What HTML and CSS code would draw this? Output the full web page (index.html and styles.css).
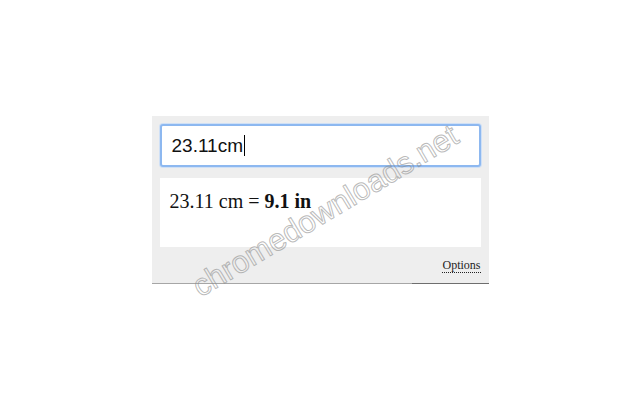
FILE: index.html
```html
<!DOCTYPE html>
<html>
<head>
<meta charset="utf-8">
<link rel="stylesheet" href="styles.css">
</head>
<body>
<div class="panel">
  <div class="input"><span class="value">23.11cm</span><span class="caret"></span></div>
  <div class="result">23.11 cm = <b>9.1 in</b></div>
  <div class="footer"><a class="options">Options</a></div>
  <div class="watermark">chromedownloads.net</div>
</div>
</body>
</html>
```
FILE: styles.css
```css
html, body { margin: 0; padding: 0; background: #ffffff; }
body { width: 640px; height: 400px; overflow: hidden; }
.panel {
  position: relative;
  width: 321px;
  margin: 116px auto 0;
  padding: 8px 8px 0 8px;
  background: #eeeeee;
  border-bottom: 1px solid #a6a6a6;
}
.panel::after {
  content: "";
  position: absolute;
  right: 0;
  bottom: -1px;
  width: 77px;
  height: 1px;
  background: #6e6e6e;
}
.input {
  height: 39px;
  display: flex;
  align-items: center;
  padding-left: 10px;
  background: #fff;
  border: 2px solid #8db8f0;
  border-radius: 3px;
  box-shadow: 0 0 0 1px #cfe0f6;
  font-family: "Liberation Sans", Arial, sans-serif;
  font-size: 19px;
  color: #111;
}
.caret { display: inline-block; width: 1px; height: 21px; background: #000; margin-left: 1px; }
.result {
  margin-top: 11px;
  height: 69px;
  box-sizing: border-box;
  padding: 12px 0 0 10px;
  background: #fff;
  font-family: "Liberation Serif", "Times New Roman", serif;
  font-size: 20px;
  color: #111;
}
.footer {
  height: 36px;
  display: flex;
  justify-content: flex-end;
  align-items: flex-start;
  padding-top: 11px;
  box-sizing: border-box;
}
.options {
  font-family: "Liberation Serif", "Times New Roman", serif;
  font-size: 12px;
  color: #222;
  border-bottom: 1px dotted #222;
  line-height: 14px;
}
.watermark {
  position: absolute;
  left: 172px;
  top: 78px;
  width: 300px;
  transform: translate(-50%, 0) rotate(-31deg);
  font-family: "Liberation Sans", Arial, sans-serif;
  font-size: 31px;
  color: transparent;
  -webkit-text-stroke: 1px rgba(140,140,140,0.6);
  white-space: nowrap;
  pointer-events: none;
}
```
